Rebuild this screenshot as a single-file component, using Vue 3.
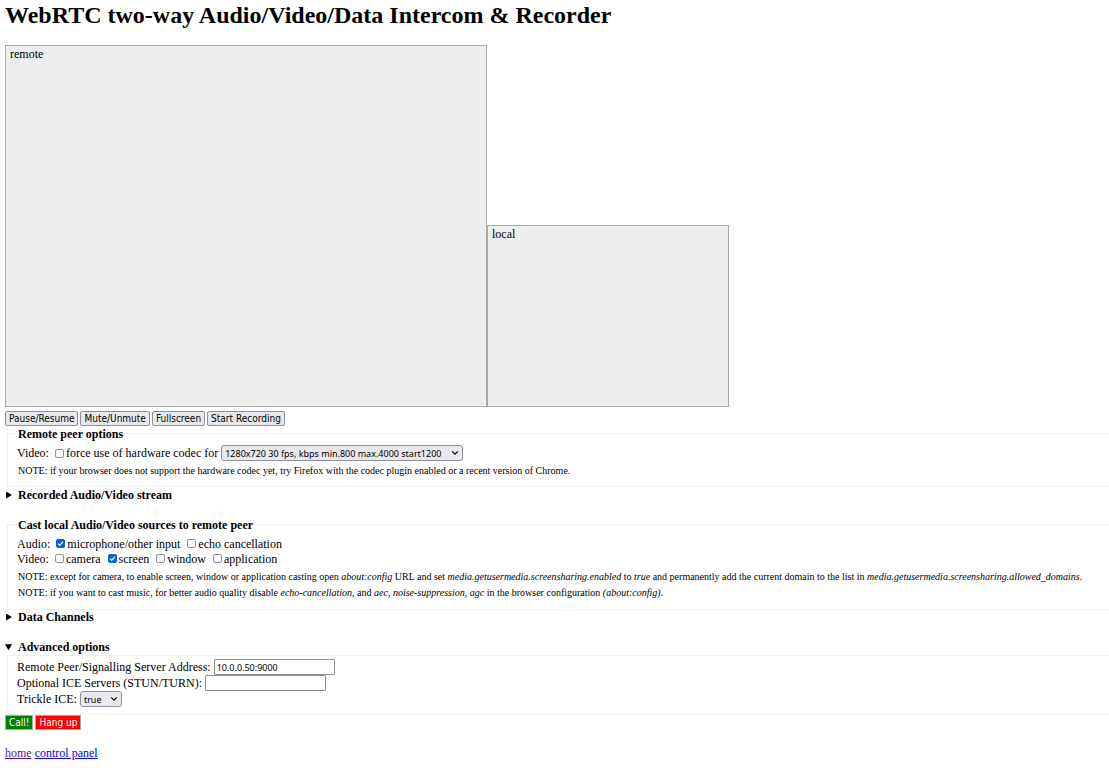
<script setup>
import { ref } from 'vue'

const force = ref(false)
const profile = ref('720p')
const mic = ref(true)
const echo = ref(false)
const sources = ref([
  { id: 'camera', on: false },
  { id: 'screen', on: true },
  { id: 'window', on: false },
  { id: 'application', on: false },
])
const address = ref('10.0.0.50:9000')
const ice = ref('')
const trickle = ref('true')
</script>

<template>
  <main class="page">
    <h1>WebRTC two-way Audio/Video/Data Intercom &amp; Recorder</h1>

    <div class="videos">
      <div class="video remote">remote</div>
      <div class="video local">local</div>
    </div>

    <div class="buttons">
      <button type="button">Pause/Resume</button>
      <button type="button">Mute/Unmute</button>
      <button type="button">Fullscreen</button>
      <button type="button">Start Recording</button>
    </div>

    <fieldset class="peer">
      <legend>Remote peer options</legend>
      <div class="row tall">
        <span class="kind">Video:</span>
        <label class="check"><input v-model="force" type="checkbox">force use of hardware codec</label>
        <label for="profile">for</label>
        <span class="pick wide">
          <select id="profile" v-model="profile">
            <option value="720p">1280x720 30 fps, kbps min.800 max.4000 start1200</option>
          </select>
          <svg viewBox="0 0 8 6" aria-hidden="true"><path d="M1.2 1.4 4 4.2 6.8 1.4" /></svg>
        </span>
      </div>
      <p>NOTE: if your browser does not support the hardware codec yet, try Firefox with the codec plugin enabled or a recent version of Chrome.</p>
    </fieldset>

    <details class="recorded">
      <summary>Recorded Audio/Video stream</summary>
    </details>

    <fieldset class="cast">
      <legend>Cast local Audio/Video sources to remote peer</legend>
      <div class="row">
        <span class="kind">Audio:</span>
        <label class="check"><input v-model="mic" type="checkbox">microphone/other input</label>
        <label class="check spaced"><input v-model="echo" type="checkbox">echo cancellation</label>
      </div>
      <div class="row">
        <span class="kind">Video:</span>
        <label v-for="s in sources" :key="s.id" class="check source"><input v-model="s.on" type="checkbox">{{ s.id }}</label>
      </div>
      <p>NOTE: except for camera, to enable screen, window or application casting open <i>about:config</i> URL and set <i>media.getusermedia.screensharing.enabled</i> to <i>true</i> and permanently add the current domain to the list in <i>media.getusermedia.screensharing.allowed_domains</i>.</p>
      <p>NOTE: if you want to cast music, for better audio quality disable <i>echo-cancellation</i>, and <i>aec</i>, <i>noise-suppression</i>, <i>agc</i> in the browser configuration <i>(about:config)</i>.</p>
    </fieldset>

    <details class="channels">
      <summary>Data Channels</summary>
    </details>

    <details open>
      <summary>Advanced options</summary>
      <fieldset class="advanced">
        <div class="row field">
          <label for="address">Remote Peer/Signalling Server Address:</label>
          <input id="address" v-model="address" type="text">
        </div>
        <div class="row field">
          <label for="ice">Optional ICE Servers (STUN/TURN):</label>
          <input id="ice" v-model="ice" type="text">
        </div>
        <div class="row field">
          <label for="trickle">Trickle ICE:</label>
          <span class="pick">
            <select id="trickle" v-model="trickle">
              <option>true</option>
              <option>false</option>
            </select>
            <svg viewBox="0 0 8 6" aria-hidden="true"><path d="M1.2 1.4 4 4.2 6.8 1.4" /></svg>
          </span>
        </div>
      </fieldset>
    </details>

    <div class="actions">
      <button type="button" class="call">Call!</button>
      <button type="button" class="hang">Hang up</button>
    </div>

    <nav>
      <a class="visited" href="#home">home</a>
      <a href="#panel">control panel</a>
    </nav>
  </main>
</template>

<style>
body {
  margin: 0;
  background: #fff;
}
</style>

<style scoped>
.page {
  padding: 1px 0 0 5px;
  color: #000;
  font: 12px/16px "Liberation Serif", "Times New Roman", serif;
  white-space: nowrap;
  overflow: hidden;
}
h1 {
  margin: 0 0 16px;
  font-size: 24px;
  line-height: 28px;
}
.videos {
  display: flex;
  align-items: flex-end;
}
.video {
  box-sizing: border-box;
  padding: 0 4px;
  border: 1px solid #a9a9a9;
  background: #eee;
}
.remote {
  width: 482px;
  height: 362px;
}
.local {
  width: 242px;
  height: 182px;
}
.buttons,
.actions {
  display: flex;
  gap: 2px;
}
.buttons {
  margin-top: 4px;
}
button,
select,
input {
  box-sizing: border-box;
  margin: 0;
  color: #000;
  font: 9px/13px "Noto Sans", "Open Sans", sans-serif;
}
button {
  height: 15px;
  padding: 0 3px;
  border: 1px solid #8f8f9d;
  border-radius: 2px;
  background: #e9e9ed;
  font: 10px/13px "DejaVu Sans Condensed", "DejaVu Sans", sans-serif;
}
fieldset {
  box-sizing: border-box;
  min-width: 0;
  margin: 0 0 0 2px;
  padding: 0 9px;
  border: 1px solid #efefef;
  border-right: 0;
}
legend {
  height: 13px;
  padding: 0 2px 0 1px;
  font-weight: bold;
  line-height: 15px;
}
.peer {
  height: 60px;
  margin-top: 1px;
}
.cast {
  height: 92px;
}
.advanced {
  height: 60px;
  padding-top: 3px;
}
.row {
  display: flex;
  align-items: center;
  gap: 3px;
  height: 15px;
}
.tall {
  height: 24px;
  margin-top: 1px;
}
.cast .row:first-of-type {
  margin-top: 5px;
}
.kind {
  margin-right: 3px;
}
.check {
  display: flex;
  align-items: center;
  gap: 2px;
}
.spaced,
.source + .source {
  margin-left: 4px;
}
input[type="checkbox"] {
  appearance: none;
  width: 9px;
  height: 9px;
  border: 1px solid #8f8f9d;
  border-radius: 2px;
  background: #fff;
}
input[type="checkbox"]:checked {
  border-color: #0060df;
  background: #0060df url("data:image/svg+xml,%3Csvg xmlns='http://www.w3.org/2000/svg' viewBox='0 0 7 7'%3E%3Cpath d='M1 3.7 2.7 5.4 6 1.6' fill='none' stroke='white' stroke-width='1.2'/%3E%3C/svg%3E") center / 7px 7px no-repeat;
}
p {
  margin: 0 0 0 1px;
  font-size: 10px;
  line-height: 16px;
}
.peer p {
  margin-top: -2px;
}
.cast .row + p {
  margin-top: 3px;
}
.pick {
  display: inline-grid;
  align-items: center;
  width: 42px;
}
.pick.wide {
  width: 242px;
}
.pick > * {
  grid-area: 1 / 1;
}
.pick svg {
  justify-self: end;
  width: 8px;
  height: 6px;
  margin-right: 4px;
  fill: none;
  stroke: #000;
  stroke-width: 1.2;
  pointer-events: none;
}
select {
  appearance: none;
  width: 100%;
  height: 16px;
  padding: 0 3px;
  border: 1px solid #8f8f9d;
  border-radius: 3px;
  background: #e9e9ed;
}
summary {
  display: flex;
  align-items: center;
  gap: 6px;
  height: 16px;
  font-weight: bold;
}
summary::before {
  content: "";
  width: 7px;
  height: 7px;
  background: #000;
  clip-path: polygon(15% 0, 100% 50%, 15% 100%);
}
details[open] > summary::before {
  clip-path: polygon(0 10%, 100% 10%, 50% 95%);
}
.recorded {
  margin-bottom: 15px;
}
.channels {
  margin-bottom: 15px;
}
.channels summary {
  height: 14px;
}
.field {
  height: 16px;
}
.field input {
  width: 121px;
  height: 16px;
  padding: 0 2px;
  border: 1px solid #8f8f9d;
  border-radius: 1px;
}
.actions .call,
.actions .hang {
  border: 1px solid #a9a9a9;
  border-radius: 0;
  color: #fff;
}
.actions .call {
  background: #008000;
}
.actions .hang {
  background: #f00;
}
nav {
  display: flex;
  gap: 3px;
  margin-top: 15px;
}
a {
  color: #00e;
  text-decoration: underline;
}
a.visited {
  color: #551a8b;
}
</style>
